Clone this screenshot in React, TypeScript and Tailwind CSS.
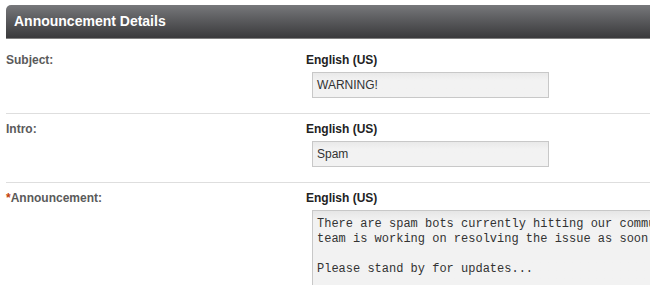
export default function App() {
  const rows = [
    { label: "Subject:", value: "WARNING!" },
    { label: "Intro:", value: "Spam" },
  ];

  return (
    <div className="h-[285px] w-[650px] overflow-hidden bg-white font-['Liberation_Sans',Arial,sans-serif]">
      <div className="ml-[6px] mt-[5px] w-[760px]">
        {/* Header bar */}
        <div className="flex h-[34px] items-center rounded-tl-[5px] border-b border-[#808080] bg-gradient-to-b from-[#77787b] to-[#3a3a3c] pl-[8px]">
          <h2 className="text-[14px] font-bold text-white">Announcement Details</h2>
        </div>

        {rows.map((row, i) => (
          <div
            key={row.label}
            className={`flex border-b border-[#dedede] ${i === 0 ? "pb-[15px] pt-[14px]" : "pb-[15px] pt-[8px]"}`}
          >
            <div className="w-[300px] shrink-0 text-[12px] font-bold leading-[14px] text-[#5a5a5a]">{row.label}</div>
            <div>
              <div className="text-[12px] font-bold leading-[14px] text-[#222]">English (US)</div>
              <div className="ml-[6px] mt-[5px] flex h-[26px] w-[237px] items-center border border-[#c8c8c8] bg-gradient-to-b from-[#e9e9e9] to-[#f2f2f2] to-[30%] pl-[4px] text-[12px] text-[#333]">
                {row.value}
              </div>
            </div>
          </div>
        ))}

        {/* Announcement body */}
        <div className="flex pt-[8px]">
          <div className="w-[300px] shrink-0 text-[12px] font-bold leading-[14px] text-[#5a5a5a]">
            <span className="text-[#c2410c]">*</span>Announcement:
          </div>
          <div>
            <div className="text-[12px] font-bold leading-[14px] text-[#222]">English (US)</div>
            <div className="ml-[6px] mt-[5px] h-[120px] w-[440px] border border-[#c8c8c8] bg-gradient-to-b from-[#e6e6e6] to-[#f2f2f2] to-[8%] px-[4px] pt-[6px] font-['Liberation_Mono','Courier_New',monospace] text-[12px] leading-[15px] whitespace-pre text-[#333]">
              {"There are spam bots currently hitting our community. Our\nteam is working on resolving the issue as soon as possible.\n\nPlease stand by for updates..."}
            </div>
          </div>
        </div>
      </div>
    </div>
  );
}
